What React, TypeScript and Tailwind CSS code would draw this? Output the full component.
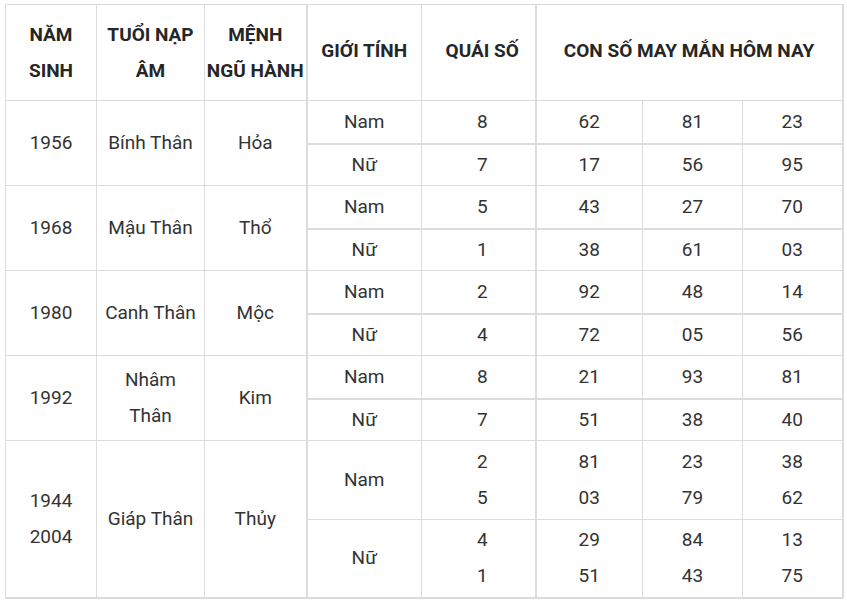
import React from "react";

type Group = {
  year: string[];
  tuoi: string[];
  menh: string;
  tall?: boolean;
  rows: { gender: string; quai: string[]; nums: string[][] }[];
};

const groups: Group[] = [
  { year: ["1956"], tuoi: ["Bính Thân"], menh: "Hỏa", rows: [
    { gender: "Nam", quai: ["8"], nums: [["62"], ["81"], ["23"]] },
    { gender: "Nữ", quai: ["7"], nums: [["17"], ["56"], ["95"]] },
  ] },
  { year: ["1968"], tuoi: ["Mậu Thân"], menh: "Thổ", rows: [
    { gender: "Nam", quai: ["5"], nums: [["43"], ["27"], ["70"]] },
    { gender: "Nữ", quai: ["1"], nums: [["38"], ["61"], ["03"]] },
  ] },
  { year: ["1980"], tuoi: ["Canh Thân"], menh: "Mộc", rows: [
    { gender: "Nam", quai: ["2"], nums: [["92"], ["48"], ["14"]] },
    { gender: "Nữ", quai: ["4"], nums: [["72"], ["05"], ["56"]] },
  ] },
  { year: ["1992"], tuoi: ["Nhâm", "Thân"], menh: "Kim", rows: [
    { gender: "Nam", quai: ["8"], nums: [["21"], ["93"], ["81"]] },
    { gender: "Nữ", quai: ["7"], nums: [["51"], ["38"], ["40"]] },
  ] },
  { year: ["1944", "2004"], tuoi: ["Giáp Thân"], menh: "Thủy", tall: true, rows: [
    { gender: "Nam", quai: ["2", "5"], nums: [["81", "03"], ["23", "79"], ["38", "62"]] },
    { gender: "Nữ", quai: ["4", "1"], nums: [["29", "51"], ["84", "43"], ["13", "75"]] },
  ] },
];

const Lines = ({ lines }: { lines: string[] }) => (
  <>
    {lines.map((l, i) => (
      <div key={i}>{l}</div>
    ))}
  </>
);

const td = "border border-[#dcdcdc] p-0 text-center align-middle";

export default function App() {
  return (
    <div className="w-[847px] h-[600px] bg-white pl-[5px] pt-[4px] font-['Roboto',sans-serif] text-[19px] leading-[36px] text-[#333333]">
      <table className="w-[837px] table-fixed border-collapse border-r-2 border-b-2 border-[#dcdcdc]">
        <colgroup>
          <col className="w-[91px]" />
          <col className="w-[108px]" />
          <col className="w-[102px]" />
          <col className="w-[115px]" />
          <col className="w-[114px]" />
          <col className="w-[107px]" />
          <col className="w-[100px]" />
          <col className="w-[100px]" />
        </colgroup>
        <thead>
          <tr className="h-[96px] font-bold text-[#262626]">
            <th className={td}>
              <Lines lines={["NĂM", "SINH"]} />
            </th>
            <th className={td}>
              <Lines lines={["TUỔI NẠP", "ÂM"]} />
            </th>
            <th className={`${td} border-r-2`}>
              <Lines lines={["MỆNH", "NGŨ HÀNH"]} />
            </th>
            <th className={`${td} align-top pt-[28px]`}>GIỚI TÍNH</th>
            <th className={`${td} border-r-2 align-top pt-[28px] pl-[8px]`}>QUÁI SỐ</th>
            <th colSpan={3} className={`${td} align-top pt-[28px]`}>
              CON SỐ MAY MẮN HÔM NAY
            </th>
          </tr>
        </thead>
        <tbody>
          {groups.map((g, gi) =>
            g.rows.map((r, ri) => {
              const thick = ri === 0 && !g.tall ? "border-b-2" : "";
              const h = g.tall ? (ri === 0 ? "h-[79px]" : "h-[78px]") : ri === 0 ? "h-[43px]" : "h-[42px]";
              return (
                <tr key={`${gi}-${ri}`} className={h}>
                  {ri === 0 && (
                    <>
                      <td rowSpan={2} className={td}>
                        <Lines lines={g.year} />
                      </td>
                      <td rowSpan={2} className={td}>
                        <Lines lines={g.tuoi} />
                      </td>
                      <td rowSpan={2} className={`${td} border-r-2`}>
                        {g.menh}
                      </td>
                    </>
                  )}
                  <td className={`${td} ${thick}`}>{r.gender}</td>
                  <td className={`${td} ${thick} border-r-2 pl-[8px]`}>
                    <Lines lines={r.quai} />
                  </td>
                  {r.nums.map((n, ni) => (
                    <td key={ni} className={`${td} ${thick}`}>
                      <Lines lines={n} />
                    </td>
                  ))}
                </tr>
              );
            })
          )}
        </tbody>
      </table>
    </div>
  );
}
